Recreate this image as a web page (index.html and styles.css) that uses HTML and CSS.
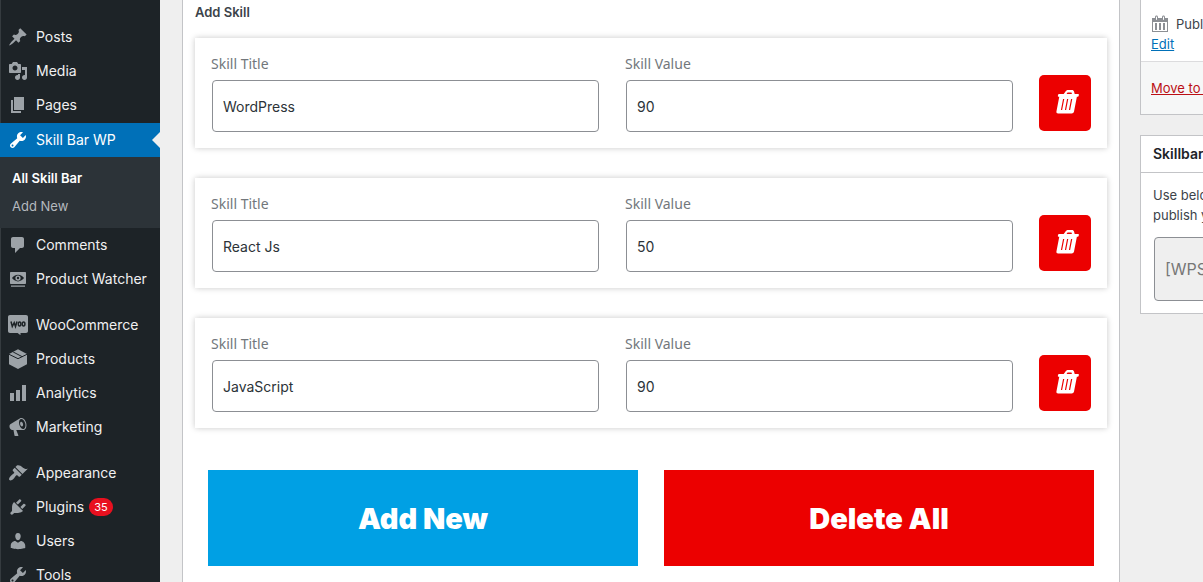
FILE: index.html
```
<!DOCTYPE html>
<html lang="en">
  <head>
    <meta charset="UTF-8" />
    <meta name="viewport" content="width=device-width, initial-scale=1.0" />
    <title>Skill Bar WP</title>
    <link rel="stylesheet" href="styles.css">
  </head>
  <body>
    <div class="layout">
      <nav class="menu">
        <a href="#" class="menu-item">
          <svg class="icon" viewBox="0 0 20 20"><path d="M10.44 3.02l1.82-1.82 6.36 6.35-1.83 1.82c-1.05-.68-2.48-.57-3.41.36l-.75.75c-.92.93-1.04 2.35-.35 3.41l-1.83 1.82-2.41-2.41-2.8 2.79c-.42.42-3.38 2.71-3.8 2.29s1.86-3.39 2.28-3.81l2.79-2.79L4.1 9.36l1.83-1.82c1.05.69 2.48.57 3.4-.36l.75-.75c.93-.92 1.05-2.35.36-3.41z"/></svg>
          Posts
        </a>
        <a href="#" class="menu-item">
          <svg class="icon" viewBox="0 0 20 20"><path d="M13 11V4c0-.55-.45-1-1-1h-1.67L9 1H5L3.67 3H2c-.55 0-1 .45-1 1v7c0 .55.45 1 1 1h10c.55 0 1-.45 1-1zM7 4.5c1.38 0 2.5 1.12 2.5 2.5S8.38 9.5 7 9.5 4.5 8.38 4.5 7 5.62 4.5 7 4.5zM14 6h5v10.5c0 1.38-1.12 2.5-2.5 2.5S14 17.88 14 16.5s1.12-2.5 2.5-2.5c.17 0 .34.02.5.05V9h-3V6zm-4 8.05V13h2v3.5c0 1.38-1.12 2.5-2.5 2.5S7 17.88 7 16.5 8.12 14 9.5 14c.17 0 .34.02.5.05z"/></svg>
          Media
        </a>
        <a href="#" class="menu-item">
          <svg class="icon" viewBox="0 0 20 20"><path d="M6 15V2h10v13H6zm-1 1h8v2H3V5h2v11z"/></svg>
          Pages
        </a>
        <a href="#" class="menu-item active">
          <svg class="icon" viewBox="0 0 20 20"><path d="M16.68 9.77c-1.34 1.34-3.3 1.67-4.95.99l-5.41 6.52c-.99.99-2.59.99-3.58 0s-.99-2.59 0-3.57l6.52-5.42c-.68-1.65-.35-3.61.99-4.95 1.28-1.28 3.12-1.62 4.72-1.06l-2.89 2.89 2.82 2.82 2.86-2.87c.53 1.58.18 3.39-1.08 4.65zM3.81 16.21c.4.39 1.04.39 1.43 0 .4-.4.4-1.04 0-1.43-.39-.4-1.03-.4-1.43 0-.39.39-.39 1.03 0 1.43z"/></svg>
          Skill Bar WP
        </a>
        <div class="submenu">
          <a href="#" class="current">All Skill Bar</a>
          <a href="#">Add New</a>
        </div>
        <a href="#" class="menu-item">
          <svg class="icon" viewBox="0 0 20 20"><path d="M5 2h9c1.1 0 2 .9 2 2v7c0 1.1-.9 2-2 2h-2l-5 5v-5H5c-1.1 0-2-.9-2-2V4c0-1.1.9-2 2-2z"/></svg>
          Comments
        </a>
        <a href="#" class="menu-item">
          <svg class="icon" viewBox="0 0 20 20"><path fill-rule="evenodd" d="M3 3h14c.6 0 1 .4 1 1v10c0 .6-.4 1-1 1H3c-.6 0-1-.4-1-1V4c0-.6.4-1 1-1zm7 2.800c-2.600 0-4.800 1.400-6 3.300 1.200 1.900 3.400 3.300 6 3.300s4.800-1.400 6-3.300c-1.200-1.900-3.400-3.300-6-3.300z"/><path d="M10 6.500a2.600 2.600 0 1 1 0 5.200 2.600 2.600 0 0 1 0-5.200zM3 16.500h14v1.200H3z"/><circle class="hole" cx="10" cy="9" r="1.200"/></svg>
          Product Watcher
        </a>
        <div class="separator"></div>
        <a href="#" class="menu-item">
          <svg class="icon" viewBox="0 0 20 20"><path d="M2 0h16c1.200 0 2 .8 2 2v14c0 1.200-.8 2-2 2h-5.500v2.200L9.600 18H2c-1.200 0-2-.8-2-2V2C0 .8.800 0 2 0z"/><path class="line" d="M3 6.500l1.300 5 1.900-3.800 1.300 3.800L9 6.500"/><ellipse class="line" cx="11.600" cy="9" rx="1.300" ry="2"/><ellipse class="line" cx="15.600" cy="9" rx="1.300" ry="2"/></svg>
          WooCommerce
        </a>
        <a href="#" class="menu-item">
          <svg class="icon" viewBox="0 0 20 20"><path d="M10 .3L19 5v10.300L10 20 1 15.300V5z"/><path class="line thin" d="M1 5.300l9 4.400 9-4.400M5.200 3l9 4.700"/></svg>
          Products
        </a>
        <a href="#" class="menu-item">
          <svg class="icon" viewBox="0 0 20 20"><path d="M18 18V2h-4v16h4zm-6 0V7H8v11h4zm-6 0v-8H2v8h4z"/></svg>
          Analytics
        </a>
        <a href="#" class="menu-item">
          <svg class="icon" viewBox="0 0 20 20"><path d="M18.150 5.940c.46 1.620.38 3.220-.02 4.480-.42 1.280-1.260 2.180-2.300 2.480-.16.06-.26.06-.4.06-.06.02-.12.02-.18.02-.06.02-.14.02-.22.02h-6.800l2.220 5.500c.02.14-.06.26-.14.34-.08.1-.24.16-.34.16H6.950c-.1 0-.26-.06-.34-.16-.08-.08-.16-.2-.14-.34l-1-5.500H4.250l-.02-.02c-.5.06-1.080-.18-1.540-.62s-.88-1.080-1.060-1.880c-.24-.8-.2-1.560-.02-2.200.18-.62.58-1.080 1.060-1.300l.02-.02 9-5.400c.1-.06.18-.1.24-.16.06-.04.14-.08.24-.12.16-.08.28-.12.5-.18 1.040-.3 2.240.1 3.220.98s1.840 2.240 2.260 3.860zm-2.580 5.980h-.02c.4-.1.74-.34 1.040-.7.58-.7.86-1.760.86-3.040 0-.64-.1-1.300-.28-1.980-.34-1.360-1.020-2.500-1.780-3.240s-1.680-1.100-2.460-.88c-.82.22-1.400.96-1.700 2-.32 1.040-.28 2.360.06 3.720.38 1.360 1 2.500 1.800 3.240.78.74 1.620 1.100 2.480.88zm-2.540-7.080c.22-.04.42-.02.62.04.38.16.76.48 1.020 1s.42 1.200.42 1.780c0 .3-.04.56-.12.8-.18.48-.44.84-.86.94-.34.1-.8-.06-1.140-.4s-.64-.86-.78-1.500c-.18-.62-.12-1.240.02-1.720s.48-.84.82-.94z"/></svg>
          Marketing
        </a>
        <div class="separator"></div>
        <a href="#" class="menu-item">
          <svg class="icon" viewBox="0 0 20 20"><path d="M14.480 11.060L7.410 3.990l1.500-1.500c.5-.56 2.300-.47 3.510.32 1.210.8 1.430 1.280 2.910 2.100 1.180.64 2.450 1.260 4.450.85zm-.71.71L6.700 4.700 4.930 6.470c-.39.39-.39 1.020 0 1.410l1.060 1.060c.39.39.39 1.030 0 1.420-.6.6-1.430 1.110-2.210 1.690-.35.26-.7.53-1.010.84C1.430 14.230.4 16.080 1.400 17.070c.99 1 2.840-.03 4.180-1.360.31-.31.58-.66.85-1.020.57-.78 1.080-1.610 1.690-2.210.39-.39 1.020-.39 1.410 0l1.060 1.060c.39.39 1.020.39 1.410 0z"/></svg>
          Appearance
        </a>
        <a href="#" class="menu-item">
          <svg class="icon" viewBox="0 0 20 20"><path d="M13.110 4.360L9.870 7.600 8 5.730l3.240-3.240c.35-.34 1.050-.2 1.560.32.52.51.66 1.210.31 1.550zm-8 1.770l.91-1.120 9.010 9.010-1.190.84c-.71.71-2.630 1.160-3.820 1.160H6.140L4.900 17.260c-.59.59-1.540.59-2.120 0-.59-.58-.59-1.530 0-2.120l1.240-1.240v-3.880c0-1.130.4-3.190 1.090-3.890zm7.260 3.970l3.240-3.240c.34-.35 1.040-.21 1.550.31.52.51.66 1.210.31 1.550l-3.240 3.250z"/></svg>
          Plugins <span class="count">35</span>
        </a>
        <a href="#" class="menu-item">
          <svg class="icon" viewBox="0 0 20 20"><path d="M10 9.250c-2.270 0-2.730-3.440-2.730-3.440C7 4.020 7.820 2 9.970 2c2.160 0 2.980 2.020 2.710 3.810 0 0-.41 3.440-2.680 3.440zm0 2.570L12.720 10c2.390 0 4.520 2.330 4.520 4.530v2.490s-3.650 1.130-7.240 1.130c-3.650 0-7.240-1.130-7.240-1.130v-2.490c0-2.250 1.940-4.480 4.470-4.480z"/></svg>
          Users
        </a>
        <a href="#" class="menu-item">
          <svg class="icon" viewBox="0 0 20 20"><path d="M16.680 9.770c-1.340 1.340-3.300 1.670-4.950.99l-5.410 6.520c-.99.99-2.590.99-3.580 0s-.99-2.590 0-3.570l6.520-5.420c-.68-1.650-.35-3.610.99-4.950 1.280-1.280 3.120-1.620 4.720-1.060l-2.890 2.890 2.820 2.820 2.860-2.870c.53 1.580.18 3.390-1.080 4.650zM3.810 16.210c.4.39 1.040.39 1.430 0 .4-.4.4-1.040 0-1.430-.39-.4-1.030-.4-1.430 0-.39.39-.39 1.030 0 1.430z"/></svg>
          Tools
        </a>
      </nav>

      <main class="panel">
        <h2>Add Skill</h2>
        <form action="">
          <div class="skill">
            <div class="field">
              <label for="title1">Skill Title</label>
              <input type="text" id="title1" value="WordPress" />
            </div>
            <div class="field">
              <label for="value1">Skill Value</label>
              <input type="text" id="value1" value="90" />
            </div>
            <button type="button" class="remove" aria-label="Delete">
              <svg viewBox="0 0 24 24"><use href="#trash" /></svg>
            </button>
          </div>
          <div class="skill">
            <div class="field">
              <label for="title2">Skill Title</label>
              <input type="text" id="title2" value="React Js" />
            </div>
            <div class="field">
              <label for="value2">Skill Value</label>
              <input type="text" id="value2" value="50" />
            </div>
            <button type="button" class="remove" aria-label="Delete">
              <svg viewBox="0 0 24 24"><use href="#trash" /></svg>
            </button>
          </div>
          <div class="skill">
            <div class="field">
              <label for="title3">Skill Title</label>
              <input type="text" id="title3" value="JavaScript" />
            </div>
            <div class="field">
              <label for="value3">Skill Value</label>
              <input type="text" id="value3" value="90" />
            </div>
            <button type="button" class="remove" aria-label="Delete">
              <svg viewBox="0 0 24 24"><use href="#trash" /></svg>
            </button>
          </div>
          <div class="actions">
            <button type="button" class="add">Add New</button>
            <button type="button" class="delete">Delete All</button>
          </div>
        </form>
      </main>

      <aside class="side">
        <div class="box">
          <div class="publish">
            <svg class="icon" viewBox="0 0 20 20"><path d="M15 4h3v14H2V4h3V3c0-.83.67-1.500 1.500-1.500S8 2.170 8 3v1h4V3c0-.83.67-1.500 1.500-1.500S15 2.170 15 3v1zM6 3v2.500c0 .28.22.5.5.5s.5-.22.5-.5V3c0-.28-.22-.5-.5-.5S6 2.720 6 3zm7 0v2.500c0 .28.22.5.5.5s.5-.22.5-.5V3c0-.28-.22-.5-.5-.5s-.5.22-.5.5zm4 14V8H3v9h14zM7 16V9H5v7h2zm4 0V9H9v7h2zm4 0V9h-2v7h2z"/></svg>
            <span>Published</span>
          </div>
          <a href="#" class="edit">Edit</a>
          <div class="box-foot">
            <a href="#">Move to Trash</a>
          </div>
        </div>
        <div class="box">
          <h3>Skillbar Shortcode</h3>
          <div class="box-body">
            <label for="shortcode">Use below<br />publish your</label>
            <input type="text" id="shortcode" value="[WPSBWP]" disabled />
          </div>
        </div>
      </aside>
    </div>

    <svg class="symbols" aria-hidden="true">
      <symbol id="trash" viewBox="0 0 24 24">
        <g transform="translate(4 0) skewX(-11)">
          <path fill-rule="evenodd" d="M.8 4h4.700l1.200-2.300C7.100.6 8 0 9 0h4c1 0 1.900.6 2.300 1.500L16.500 4H20c.5 0 .8.400.8.800v1.200c0 .5-.3.800-.8.800h-.8v14.700c0 1.100-.9 2-2 2H3.600c-1.100 0-2-.9-2-2V6.800H.8C.3 6.800 0 6.500 0 6V4.800C0 4.400.3 4 .8 4zm7.500 0h5.400l-.6-1.300c-.1-.2-.2-.3-.4-.3H9.300c-.2 0-.3.1-.4.300zM5.800 9v11h1.200V9zm4 0v11h1.200V9zm4 0v11h1.200V9z"/>
        </g>
      </symbol>
    </svg>
  </body>
</html>
```
FILE: styles.css
```
* {
  margin: 0;
  padding: 0;
  box-sizing: border-box;
}
body {
  font-family: Inter, "Liberation Sans", sans-serif;
  font-size: 13px;
  color: #3c434a;
  background: #efefef;
}
input,
button {
  font-family: inherit;
}
.layout {
  display: flex;
  height: 100vh;
  overflow: hidden;
}
.symbols {
  display: none;
}
.icon {
  width: 20px;
  height: 20px;
  flex: none;
  fill: #9ca2a7;
}

/* left menu */
.menu {
  flex: 0 0 160px;
  padding-top: 20px;
  background: #1d2327;
  box-shadow: inset 1px 0 #353b3f;
}
.menu-item {
  position: relative;
  display: flex;
  align-items: center;
  height: 34px;
  padding: 0 0 1px 8px;
  gap: 8px;
  font-size: 14px;
  color: #f0f0f1;
  text-decoration: none;
}
.menu-item .line {
  fill: none;
  stroke: #1d2327;
  stroke-width: 1.5;
}
.menu-item .thin {
  stroke-width: 1;
}
.menu-item .hole {
  fill: #1d2327;
}
.active {
  margin-top: 1px;
  background: #0070b8;
  color: #fff;
}
.active .icon {
  fill: #fff;
}
.active::after {
  content: "";
  position: absolute;
  right: 0;
  border: 8px solid transparent;
  border-right-color: #efefef;
}
.submenu {
  padding: 7px 12px 8px;
  background: #2c3338;
}
.submenu a {
  display: block;
  line-height: 28px;
  color: #b4b9be;
  text-decoration: none;
}
.submenu .current {
  color: #fff;
  font-weight: 600;
}
.separator {
  height: 12px;
}
.count {
  padding: 0 5px;
  margin-left: -3px;
  border-radius: 9px;
  background: #e8101f;
  font-size: 11px;
  line-height: 18px;
  color: #fff;
}

/* skills */
.panel {
  flex: 1;
  min-width: 0;
  margin-left: 22px;
  padding: 0 12px;
  background: #fff;
  border: 1px solid #c3c4c7;
  border-width: 0 1px;
}
.panel h2 {
  padding: 2px 0 16px;
  font-size: 13px;
  font-weight: 600;
  line-height: 20px;
}
.skill {
  display: flex;
  align-items: flex-end;
  gap: 25px;
  height: 110px;
  padding: 16px;
  margin-bottom: 30px;
  background: #fff;
  box-shadow: 0 0 6px rgba(0, 0, 0, 0.22);
}
.field {
  flex: 1;
}
.field label {
  display: block;
  margin-bottom: 6px;
  font-family: "Noto Sans", sans-serif;
  font-size: 14px;
  line-height: 20px;
  color: #72777c;
}
.field input {
  display: block;
  width: calc(100% - 2px);
  height: 52px;
  margin: 0 1px;
  padding: 0 10px;
  border: 1px solid #8c8f94;
  border-radius: 4px;
  font-size: 14px;
  color: #2c3338;
}
.remove {
  width: 52px;
  height: 56px;
  margin-bottom: 1px;
  padding-left: 4px;
  border: 0;
  border-radius: 5px;
  background: #ec0000;
}
.remove svg {
  width: 24px;
  height: 24px;
  fill: #fff;
}
.actions {
  display: flex;
  gap: 26px;
  padding: 12px 13px;
}
.actions button {
  flex: 1;
  height: 96px;
  border: 0;
  font-size: 29px;
  font-weight: 900;
  color: #fff;
}
.actions .add {
  background: #00a0e4;
}
.actions .delete {
  background: #ec0000;
}

/* right column, boxes run past the window edge */
.side {
  flex: 0 0 63px;
  min-width: 0;
  margin-left: 20px;
}
.box {
  width: 280px;
  margin-bottom: 20px;
  background: #fff;
  border: 1px solid #c3c4c7;
}
.box:first-child {
  border-top: 0;
}
.publish {
  display: flex;
  align-items: center;
  gap: 6px;
  padding: 14px 9px 0;
}
.publish .icon {
  fill: #8c8f94;
}
.edit {
  display: block;
  padding: 0 10px 7px;
  line-height: 20px;
  color: #0070b8;
}
.box-foot {
  padding: 16px 10px;
  border-top: 1px solid #dcdcde;
  background: #f6f7f7;
  line-height: 20px;
}
.box-foot a {
  color: #bb1015;
}
.box h3 {
  padding: 8px 12px;
  border-bottom: 1px solid #c3c4c7;
  font-size: 14px;
  font-weight: 600;
  line-height: 20px;
  color: #1d2327;
}
.box-body {
  padding: 12px;
}
.box-body label {
  display: block;
  line-height: 20px;
}
.box-body input {
  width: 100%;
  height: 64px;
  margin: 12px 1px 0;
  padding: 0 10px;
  border: 1px solid #8c8f94;
  border-radius: 4px;
  background: #efefef;
  font-size: 16px;
  color: #777;
}
```
